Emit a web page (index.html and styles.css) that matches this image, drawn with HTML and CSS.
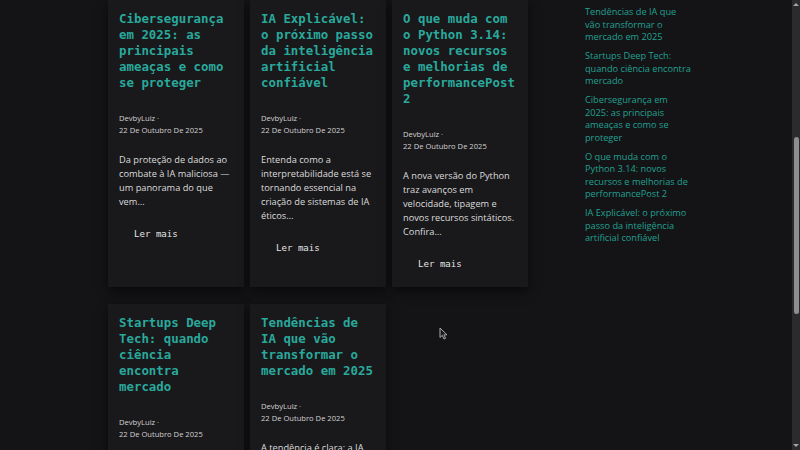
FILE: index.html
```html
<!DOCTYPE html>
<html lang="pt-BR">
<head>
<meta charset="utf-8">
<title>Blog — DevbyLuiz</title>
<link rel="stylesheet" href="styles.css">
</head>
<body>
<header class="site-header">
  <div class="brand">DevbyLuiz</div>
  <h1 class="page-title">Blog</h1>
</header>
<div class="layout">
  <main class="main">
    <h2 class="section-title">Últimos posts</h2>
    <div class="grid">
      <article class="card">
        <h3 class="card-title">Cibersegurança em 2025: as principais ameaças e como se proteger</h3>
        <div class="meta"><span>DevbyLuiz ·</span><span>22 De Outubro De 2025</span></div>
        <p class="excerpt">Da proteção de dados ao combate à IA maliciosa — um panorama do que vem…</p>
        <a class="more" href="#">Ler mais</a>
      </article>
      <article class="card">
        <h3 class="card-title">IA Explicável: o próximo passo da inteligência artificial confiável</h3>
        <div class="meta"><span>DevbyLuiz ·</span><span>22 De Outubro De 2025</span></div>
        <p class="excerpt">Entenda como a interpretabilidade está se tornando essencial na criação de sistemas de IA éticos…</p>
        <a class="more" href="#">Ler mais</a>
      </article>
      <article class="card">
        <h3 class="card-title">O que muda com o Python 3.14: novos recursos e melhorias de performancePost 2</h3>
        <div class="meta"><span>DevbyLuiz ·</span><span>22 De Outubro De 2025</span></div>
        <p class="excerpt">A nova versão do Python traz avanços em velocidade, tipagem e novos recursos sintáticos. Confira…</p>
        <a class="more" href="#">Ler mais</a>
      </article>
      <article class="card">
        <h3 class="card-title">Startups Deep Tech: quando ciência encontra mercado</h3>
        <div class="meta"><span>DevbyLuiz ·</span><span>22 De Outubro De 2025</span></div>
        <p class="excerpt">Como pesquisas de ponta estão virando negócios de alto impacto…</p>
        <a class="more" href="#">Ler mais</a>
      </article>
      <article class="card">
        <h3 class="card-title">Tendências de IA que vão transformar o mercado em 2025</h3>
        <div class="meta"><span>DevbyLuiz ·</span><span>22 De Outubro De 2025</span></div>
        <p class="excerpt">A tendência é clara: a IA deixa de ser diferencial e vira base…</p>
        <a class="more" href="#">Ler mais</a>
      </article>
    </div>
  </main>
  <aside class="sidebar">
    <h3 class="side-title">Posts recentes</h3>
    <ul class="recent">
      <li><a href="#">Tendências de IA que vão transformar o mercado em 2025</a></li>
      <li><a href="#">Startups Deep Tech: quando ciência encontra mercado</a></li>
      <li><a href="#">Cibersegurança em 2025: as principais ameaças e como se proteger</a></li>
      <li><a href="#">O que muda com o Python 3.14: novos recursos e melhorias de performancePost 2</a></li>
      <li><a href="#">IA Explicável: o próximo passo da inteligência artificial confiável</a></li>
    </ul>
  </aside>
</div>
<footer class="site-footer">© 2025 DevbyLuiz</footer>
<div class="scrollbar" aria-hidden="true">
  <span class="arrow arrow-up"></span>
  <span class="thumb"></span>
  <span class="arrow arrow-down"></span>
</div>
<svg class="cursor" width="9" height="13" viewBox="0 0 9 13" aria-hidden="true">
  <path d="M1 1 L1 10.5 L3.3 8.4 L5 12 L6.6 11.3 L4.9 7.8 L8 7.8 Z" fill="#1c1b1e" stroke="#a9a9a9" stroke-width="1" stroke-linejoin="round"/>
</svg>
<script src="script.js"></script>
</body>
</html>
```

FILE: styles.css
```css
html {
  color-scheme: dark;
  background: #141316;
}
body {
  margin: 0;
  background: #141316;
  color: #d9d9d9;
  font-family: "Open Sans", "Noto Sans", sans-serif;
}
.site-header {
  height: 270px;
  box-sizing: border-box;
  padding: 40px 108px;
}
.brand {
  font-family: "DejaVu Sans Mono", monospace;
  color: #29a99b;
  font-size: 18px;
}
.page-title {
  margin: 60px 0 0;
  font-family: "DejaVu Sans Mono", monospace;
  color: #e8e8e8;
  font-size: 32px;
}
.layout {
  display: flex;
  gap: 57px;
  padding-left: 108px;
}
.main {
  width: 420px;
}
.section-title {
  margin: 0;
  height: 40px;
  line-height: 20px;
  font-size: 14px;
  color: #e8e8e8;
}
.grid {
  display: grid;
  grid-template-columns: repeat(3, 136px);
  column-gap: 6px;
  row-gap: 17px;
}
.card {
  background: #19181b;
  padding: 11px;
  box-shadow: 0 4px 10px rgba(0, 0, 0, 0.55);
  display: flex;
  flex-direction: column;
  align-items: flex-start;
}
.card-title {
  margin: 0 0 21px;
  font-family: "DejaVu Sans Mono", monospace;
  font-weight: 700;
  font-size: 12.4px;
  line-height: 16px;
  color: #29a99b;
}
.meta {
  display: flex;
  flex-direction: column;
  font-size: 7.6px;
  line-height: 12px;
  color: #d2d2d2;
}
.excerpt {
  margin: 17px 0 13px;
  font-size: 9.25px;
  line-height: 14px;
  color: #dcdcdc;
}
.more {
  display: inline-block;
  padding: 6px 15px;
  font-family: "DejaVu Sans Mono", monospace;
  font-size: 9.1px;
  line-height: 12px;
  color: #e6e6e6;
  text-decoration: none;
}
.sidebar {
  width: 108px;
}
.side-title {
  margin: 0;
  height: 46px;
  font-size: 12px;
  color: #e8e8e8;
}
.recent {
  list-style: none;
  margin: 0;
  padding: 0;
}
.recent li {
  margin-bottom: 6.5px;
  font-size: 9.2px;
  line-height: 12.5px;
}
.recent a {
  color: #22a191;
  text-decoration: none;
}
.site-footer {
  height: 183px;
  box-sizing: border-box;
  padding: 80px 108px 0;
  font-size: 10px;
  color: #141316;
}
.scrollbar {
  position: fixed;
  top: 0;
  right: 0;
  bottom: 0;
  width: 8px;
  background: #2b2a2d;
}
.thumb {
  position: absolute;
  top: 137px;
  left: 1.5px;
  width: 5px;
  height: 177px;
  border-radius: 3px;
  background: #8e8d90;
}
.arrow {
  position: absolute;
  left: 1px;
  width: 0;
  height: 0;
  border-left: 3px solid transparent;
  border-right: 3px solid transparent;
}
.arrow-up {
  top: 3px;
  border-bottom: 3px solid #a3a3a3;
}
.arrow-down {
  bottom: 3px;
  border-top: 3px solid #a3a3a3;
}
.cursor {
  position: fixed;
  left: 439px;
  top: 327px;
}
```

FILE: script.js
```js
window.scrollTo(0, 310);
```
